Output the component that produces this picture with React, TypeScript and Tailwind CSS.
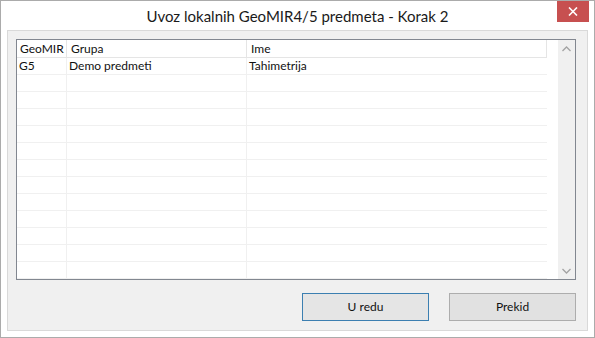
import React from "react";

const rows = Array.from({ length: 13 });

export default function App() {
  return (
    <div className="w-[595px] h-[338px] bg-white border border-[#ababab] flex flex-col font-['Lato',sans-serif] text-black overflow-hidden">
      <div className="h-[29px] flex items-center justify-center relative shrink-0">
        <span className="text-[15px] leading-none pt-[2px] text-[#1a1a1a]">Uvoz lokalnih GeoMIR4/5 predmeta - Korak 2</span>
        <div className="absolute top-0 right-[5px] w-[32px] h-[21px] bg-[#c75050] flex items-center justify-center">
          <svg width="10" height="9" viewBox="0 0 10 9">
            <path d="M1 0.5 L9 8.5 M9 0.5 L1 8.5" stroke="white" strokeWidth="1.6" />
          </svg>
        </div>
      </div>
      <div className="flex-1 mx-[6px] mb-[6px] border border-[#d9d9d9] bg-[#f0f0f0] pl-[8px] pr-[11px] pt-[8px] flex flex-col">
        <div className="h-[241px] border border-[#828790] bg-white flex overflow-hidden text-[12px] text-[#111]">
          <div className="flex-1 flex flex-col overflow-hidden">
            <div className="flex h-[18px] shrink-0">
              <div className="w-[50px] border-r border-b border-[#e5e5e5] pl-[3px] leading-[17px]">GeoMIR</div>
              <div className="w-[180px] border-r border-b border-[#e5e5e5] pl-[4px] leading-[17px]">Grupa</div>
              <div className="w-[300px] border-r border-b border-[#e5e5e5] pl-[4px] leading-[17px]">Ime</div>
            </div>
            <div className="flex h-[17px] shrink-0">
              <div className="w-[50px] border-r border-b border-[#f0f0f0] pl-[2px] leading-[16px]">G5</div>
              <div className="w-[180px] border-r border-b border-[#f0f0f0] pl-[2px] leading-[16px]">Demo predmeti</div>
              <div className="w-[300px] border-b border-[#f0f0f0] pl-[2px] leading-[16px]">Tahimetrija</div>
            </div>
            {rows.map((_, i) => (
              <div key={i} className="flex h-[17px] shrink-0">
                <div className="w-[50px] border-r border-b border-[#f0f0f0]" />
                <div className="w-[180px] border-r border-b border-[#f0f0f0]" />
                <div className="w-[300px] border-b border-[#f0f0f0]" />
              </div>
            ))}
          </div>
          <div className="w-[17px] bg-[#f0f0f0] flex flex-col justify-between shrink-0">
            <div className="h-[17px] flex items-center justify-center">
              <svg width="9" height="6" viewBox="0 0 9 6">
                <path d="M0.5 5 L4.5 1 L8.5 5" stroke="#a3a3a3" strokeWidth="1.3" fill="none" />
              </svg>
            </div>
            <div className="h-[17px] flex items-center justify-center">
              <svg width="9" height="6" viewBox="0 0 9 6">
                <path d="M0.5 1 L4.5 5 L8.5 1" stroke="#a3a3a3" strokeWidth="1.3" fill="none" />
              </svg>
            </div>
          </div>
        </div>
        <div className="flex justify-end gap-[20px] mt-[13px] text-[12px] text-[#111]">
          <button className="w-[127px] h-[28px] border border-[#3c7fb1] bg-[#e5e5e5] flex items-center justify-center font-normal">U redu</button>
          <button className="w-[127px] h-[28px] border border-[#adadad] bg-[#e1e1e1] flex items-center justify-center font-normal">Prekid</button>
        </div>
      </div>
    </div>
  );
}
